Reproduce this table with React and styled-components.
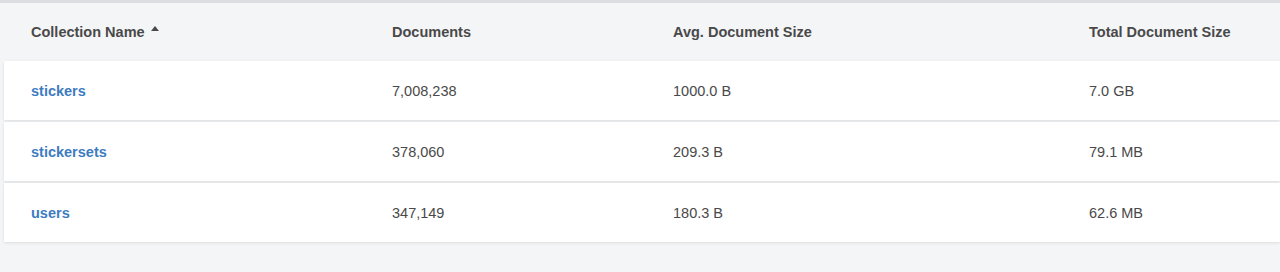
import styled, { createGlobalStyle } from 'styled-components'

const GlobalStyle = createGlobalStyle`
  html, body {
    margin: 0;
    padding: 0;
    background: #f4f5f7;
    font-family: "Liberation Sans", Arial, sans-serif;
  }
`

const collections = [
  { name: 'stickers', documents: '7,008,238', avg: '1000.0 B', total: '7.0 GB' },
  { name: 'stickersets', documents: '378,060', avg: '209.3 B', total: '79.1 MB' },
  { name: 'users', documents: '347,149', avg: '180.3 B', total: '62.6 MB' },
]

export default function App() {
  return (
    <>
      <GlobalStyle />
      <Page>
        <HeaderRow>
          <HeaderCell>
            Collection Name <SortArrow />
          </HeaderCell>
          <HeaderCell>Documents</HeaderCell>
          <HeaderCell>Avg. Document Size</HeaderCell>
          <HeaderCell>Total Document Size</HeaderCell>
        </HeaderRow>
        <Rows>
          {collections.map((c) => (
            <Row key={c.name}>
              <NameLink href="#">{c.name}</NameLink>
              <Cell>{c.documents}</Cell>
              <Cell>{c.avg}</Cell>
              <Cell>{c.total}</Cell>
            </Row>
          ))}
        </Rows>
      </Page>
    </>
  )
}

const Page = styled.div`
  border-top: 3px solid #dcdde0;
  height: 269px;
  padding-left: 4px;
`

const grid = `
  display: grid;
  grid-template-columns: 361px 281px 416px 1fr;
  align-items: center;
  padding-left: 27px;
`

const HeaderRow = styled.div`
  ${grid}
  height: 57px;
  padding-bottom: 1px;
`

const HeaderCell = styled.div`
  font-size: 14.5px;
  font-weight: bold;
  color: #494949;
  display: flex;
  align-items: center;
  gap: 6px;
`

const SortArrow = styled.span`
  width: 0;
  height: 0;
  border-left: 4px solid transparent;
  border-right: 4px solid transparent;
  border-bottom: 5px solid #494949;
  margin-top: -6px;
`

const Rows = styled.div`
  display: flex;
  flex-direction: column;
  gap: 2px;
`

const Row = styled.div`
  ${grid}
  height: 59px;
  background: #fff;
  box-shadow: 0 1px 3px rgba(0, 0, 0, 0.1);
`

const Cell = styled.div`
  font-size: 14.5px;
  color: #494949;
`

const NameLink = styled.a`
  font-size: 14.5px;
  font-weight: bold;
  color: #3d7cbf;
  text-decoration: none;
`
